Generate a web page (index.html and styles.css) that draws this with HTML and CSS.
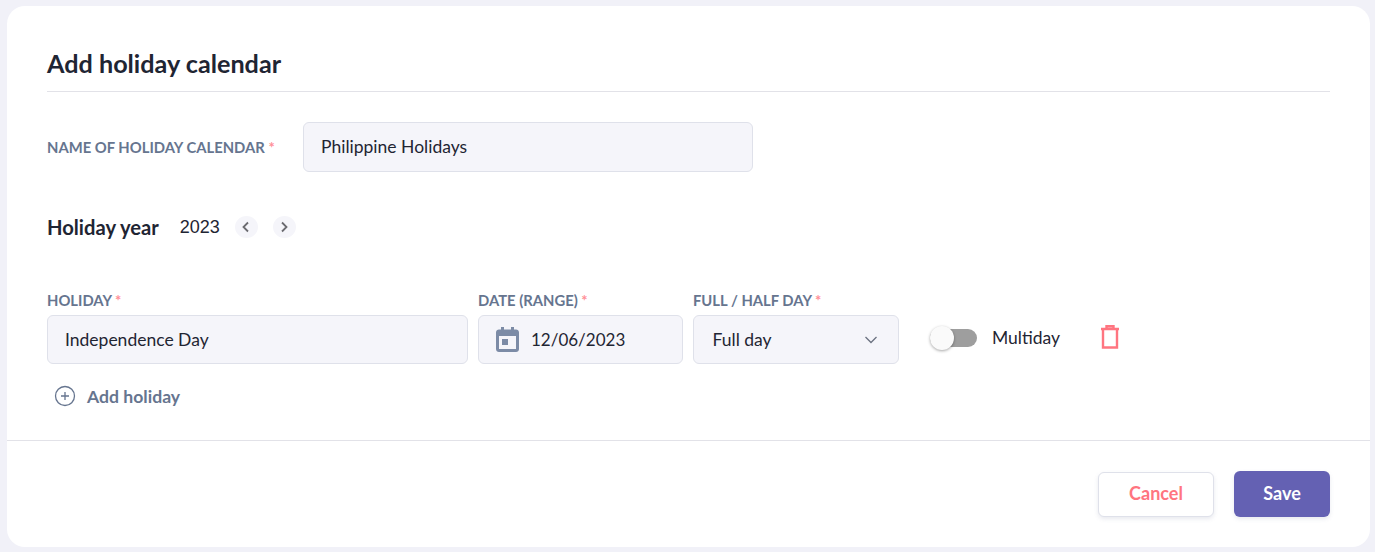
FILE: index.html
```html
<!DOCTYPE html>
<html>
<head>
  <title>Add holiday calendar</title>
  <link rel="stylesheet" href="styles.css">
</head>
<body>
  <div class="card">
    <div class="card-body">
      <h1 class="title">Add holiday calendar</h1>

      <!-- Calendar name -->
      <div class="name-row">
        <label class="label name-label">NAME OF HOLIDAY CALENDAR <span class="req">*</span></label>
        <div class="input name-input">Philippine Holidays</div>
      </div>

      <!-- Year switcher -->
      <div class="year-row">
        <h2 class="year-title">Holiday year</h2>
        <span class="year-value">2023</span>
        <div class="year-nav">
          <button class="round-btn">
            <svg width="12" height="12" viewBox="0 0 12 12"><path d="M8 1.500 3.500 6 8 10.500" fill="none" stroke="#6b6b70" stroke-width="1.800"/></svg>
          </button>
          <button class="round-btn">
            <svg width="12" height="12" viewBox="0 0 12 12"><path d="M4 1.500 8.500 6 4 10.500" fill="none" stroke="#6b6b70" stroke-width="1.800"/></svg>
          </button>
        </div>
      </div>

      <!-- Holiday rows -->
      <div class="holiday-row">
        <div class="field field-holiday">
          <label class="label">HOLIDAY <span class="req">*</span></label>
          <div class="input">Independence Day</div>
        </div>
        <div class="field field-date">
          <label class="label">DATE (RANGE) <span class="req">*</span></label>
          <div class="input date-input">
            <svg class="date-icon" width="23" height="25" viewBox="0 0 23 25"><path fill="#7c8ba6" fill-rule="evenodd" d="M5 0h3v2.500h7V0h3v2.500h2c1.700 0 3 1.300 3 3V22c0 1.700-1.300 3-3 3H3c-1.700 0-3-1.300-3-3V5.500c0-1.700 1.300-3 3-3h2zM3 9v13h17V9zM6 12h6v6H6z"/></svg>
            <span>12/06/2023</span>
          </div>
        </div>
        <div class="field field-type">
          <label class="label">FULL / HALF DAY <span class="req">*</span></label>
          <div class="input select-input">
            <span>Full day</span>
            <svg width="16" height="16" viewBox="0 0 16 16"><path d="M2.500 5 8 10.500 13.500 5" fill="none" stroke="#6b7280" stroke-width="1.300"/></svg>
          </div>
        </div>
        <div class="multiday">
          <div class="toggle"><div class="knob"></div></div>
          <span class="multiday-text">Multiday</span>
        </div>
        <button class="trash-btn">
          <svg width="20" height="24" viewBox="0 0 20 24"><path d="M1 4h18M6.500 4V1.200h7V4M3 4v18.500h14V4" fill="none" stroke="#ff7580" stroke-width="2.400"/></svg>
        </button>
      </div>

      <div class="add-row">
        <svg width="22" height="22" viewBox="0 0 22 22"><circle cx="11" cy="11" r="9.500" fill="none" stroke="#66758f" stroke-width="1.300"/><path d="M11 7v8M7 11h8" stroke="#66758f" stroke-width="1.300"/></svg>
        <span>Add holiday</span>
      </div>
    </div>

    <div class="card-footer">
      <button class="btn btn-cancel">Cancel</button>
      <button class="btn btn-save">Save</button>
    </div>
  </div>
</body>
</html>
```

FILE: styles.css
```css
/* page */
body {
  margin: 0;
  padding: 6px 5px 5px 7px;
  background-color: #f1f1f8;
  font-family: 'Lato', sans-serif;
  color: #1f2533;
  overflow: hidden;
}
.card {
  background-color: #fff;
  border-radius: 18px;
  height: 541px;
  display: flex;
  flex-direction: column;
}
.card-body {
  padding: 0 40px;
  height: 434px;
  box-sizing: border-box;
}
.title {
  margin: 0;
  padding: 40px 0 11px;
  font-size: 25.2px;
  line-height: 34px;
  font-weight: 700;
  border-bottom: 1px solid #e2e2e8;
}

/* labels and inputs */
.label {
  font-size: 14.8px;
  line-height: 17px;
  font-weight: 700;
  color: #66758f;
}
.req {
  color: #ff8f97;
}
.input {
  box-sizing: border-box;
  height: 49px;
  padding: 0 17px;
  display: flex;
  align-items: center;
  background-color: #f5f5fa;
  border: 1px solid #dfe1ea;
  border-radius: 6px;
  font-size: 17.5px;
}
.name-row {
  display: flex;
  align-items: center;
  margin-top: 30px;
}
.name-label {
  width: 256px;
}
.name-input {
  width: 450px;
  height: 50px;
  padding-bottom: 2px;
}

/* year */
.year-row {
  display: flex;
  align-items: center;
  margin-top: 38px;
  height: 34px;
}
.year-title {
  margin: 0;
  font-size: 20.2px;
  font-weight: 700;
}
.year-value {
  margin-left: 21px;
  font-family: 'Liberation Sans', sans-serif;
  font-size: 18px;
}
.year-nav {
  display: flex;
  gap: 15px;
  margin-left: 15px;
}
.round-btn {
  width: 23px;
  height: 22px;
  padding: 0;
  border: none;
  border-radius: 50%;
  background-color: #f5f5fa;
  display: flex;
  align-items: center;
  justify-content: center;
}

/* holiday row */
.holiday-row {
  display: flex;
  align-items: flex-end;
  margin-top: 48px;
}
.field {
  display: flex;
  flex-direction: column;
  gap: 6px;
  margin-right: 10px;
}
.field-holiday {
  width: 421px;
}
.field-date {
  width: 205px;
}
.field-type {
  width: 206px;
  margin-right: 31px;
}
.date-input {
  padding: 0 0 0 17px;
  gap: 12px;
  font-size: 17px;
}
.date-icon {
  flex-shrink: 0;
}
.select-input {
  padding: 0 19px 0 18.5px;
  justify-content: space-between;
}
.multiday {
  display: flex;
  align-items: center;
  height: 49px;
  gap: 15px;
  margin-bottom: 2px;
  font-size: 17.5px;
}
.toggle {
  position: relative;
  width: 47px;
  height: 18px;
  border-radius: 9px;
  background-color: #9e9e9e;
}
.knob {
  position: absolute;
  left: 0;
  top: -3px;
  width: 24px;
  height: 24px;
  border-radius: 50%;
  background-color: #fafafa;
  box-shadow: 0 1px 3px rgba(0, 0, 0, 0.35);
}
.trash-btn {
  height: 49px;
  margin: 0 0 3px 40px;
  padding: 0;
  border: none;
  background: none;
  display: flex;
  align-items: center;
}
.add-row {
  display: flex;
  align-items: center;
  gap: 11px;
  margin: 21px 0 0 7px;
  font-size: 17.6px;
  font-weight: 700;
  color: #66758f;
}

/* footer */
.card-footer {
  flex: 1;
  display: flex;
  justify-content: flex-end;
  align-items: center;
  gap: 20px;
  padding: 0 40px;
  border-top: 1px solid #e2e2e8;
}
.btn {
  height: 46px;
  padding: 0 0 3px;
  border-radius: 6px;
  font-family: 'Lato', sans-serif;
  font-size: 18px;
  font-weight: 700;
}
.btn-cancel {
  width: 116px;
  height: 45px;
  margin-top: 1px;
  padding-bottom: 4px;
  background-color: #fff;
  color: #ff7580;
  border: 1px solid #dfe1ea;
  box-shadow: 0 2px 4px rgba(100, 110, 150, 0.15);
}
.btn-save {
  width: 96px;
  background-color: #6461b3;
  color: #fff;
  border: none;
  box-shadow: 0 2px 4px rgba(100, 110, 150, 0.15);
}
```
